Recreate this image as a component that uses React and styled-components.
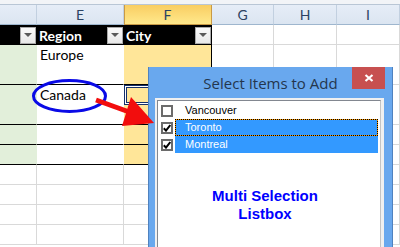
import styled, { createGlobalStyle } from 'styled-components'

const cols = '37px 87px 88px 62px 63px 63px'

const GlobalStyle = createGlobalStyle`
    *, *::before, *::after { box-sizing: border-box; }
    html, body { margin: 0; padding: 0; overflow: hidden; background: #fff; }
    body { font-family: Lato, 'Liberation Sans', sans-serif; }
`

const Screen = styled.div`
    position: relative;
    width: 400px;
    height: 247px;
    overflow: hidden;
    background: #fff;
`

const TopStrip = styled.div`
    height: 5px;
    background: #f2f4f7;
    border-bottom: 1px solid #b9c6d5;
`

const Row = styled.div`
    display: grid;
    grid-template-columns: ${cols};
    height: ${(p) => p.$h || 20}px;
`

const ColHead = styled.div`
    display: flex;
    align-items: center;
    justify-content: center;
    font-size: 14px;
    color: #2b4262;
    background: ${(p) =>
        p.$active
            ? 'linear-gradient(#f9cd62, #ffe98c)'
            : 'linear-gradient(#e6edf7, #dbe5f1)'};
    border-right: 1px solid ${(p) => (p.$active ? '#c99a45' : '#c2d0e0')};
    border-bottom: 1px solid ${(p) => (p.$active ? '#c99a45' : '#9eb6ce')};
    box-shadow: ${(p) => (p.$active ? 'inset 1px 0 #c99a45' : 'none')};
`

const Cell = styled.div`
    display: flex;
    align-items: flex-start;
    padding: 0 2px 0 3px;
    font-size: 14px;
    line-height: 20px;
    color: #000;
    background: ${(p) => p.$bg || '#fff'};
    border-right: 1px solid ${(p) => p.$br || '#d9d9d9'};
    border-bottom: 1px solid ${(p) => p.$bb || '#d9d9d9'};
    box-shadow: ${(p) =>
        p.$selected
            ? 'inset 0 0 0 1px #15306a, inset 0 0 0 2px #fff, inset 0 0 0 3px #15306a'
            : 'none'};
`

const HeadCell = styled.div`
    display: flex;
    align-items: center;
    justify-content: space-between;
    padding: 0 1px 0 2px;
    background: #000;
    color: #fff;
    font-size: 14px;
    font-weight: 700;
`

const Dropdown = styled.div`
    width: 16px;
    height: 17px;
    background: linear-gradient(#fafafa, #e8e8e8);
    border: 1px solid #a9a9a9;
    display: flex;
    align-items: center;
    justify-content: center;
    &::after {
        content: '';
        border-left: 4px solid transparent;
        border-right: 4px solid transparent;
        border-top: 4px solid #5a5a5a;
    }
`

const Dialog = styled.div`
    position: absolute;
    left: 148px;
    top: 67px;
    width: 245px;
    height: 190px;
    display: flex;
    flex-direction: column;
    padding: 0 8px 0 6px;
    background: #69a8ee;
    border: 1px solid #4f82bf;
    border-top: none;
`

const TitleBar = styled.div`
    display: grid;
    grid-template-columns: 40px 1fr 40px;
    height: 31px;
    margin: 0 -8px 0 -6px;
`

const Title = styled.div`
    align-self: center;
    text-align: center;
    font-family: 'Open Sans', sans-serif;
    font-size: 15px;
    color: #24364d;
    padding-top: 1px;
`

const CloseBtn = styled.div`
    width: 33px;
    height: 22px;
    background: #c75050;
    display: flex;
    align-items: center;
    justify-content: center;
`

const Client = styled.div`
    flex: 1;
    display: flex;
    padding: 2px 3px 0 2px;
    background: #f0f0f0;
`

const Listbox = styled.div`
    flex: 1;
    display: flex;
    flex-direction: column;
    padding: 1px 2px 0 0;
    background: #fff;
    border-left: 1px solid #828790;
    border-top: 1px solid #828790;
    border-right: 1px solid #c4c4c4;
`

const Item = styled.div`
    display: flex;
    align-items: center;
    height: 17px;
`

const CheckCell = styled.div`
    width: 17px;
    padding-left: 3px;
    display: flex;
    align-items: center;
`

const Box = styled.span`
    width: 12px;
    height: 12px;
    border: 2px solid #6b6b6b;
    background: #fff;
    display: flex;
    align-items: center;
    justify-content: center;
`

const ItemLabel = styled.div`
    flex: 1;
    height: 100%;
    display: flex;
    align-items: center;
    padding: 0 0 2px ${(p) => (p.$focus ? 9 : 10)}px;
    font-family: 'Liberation Sans', Arial, sans-serif;
    font-size: 11px;
    color: ${(p) => (p.$sel ? '#fff' : '#000')};
    background: ${(p) => (p.$sel ? '#3399ff' : 'transparent')};
    ${(p) =>
        p.$focus &&
        `border: 1px dotted #000;
         background: linear-gradient(#3399ff, #3399ff) padding-box, #ff9a00 border-box;`}
`

const Caption = styled.div`
    margin-top: 34px;
    padding-right: 6px;
    text-align: center;
    color: #0000ff;
    font-family: 'Liberation Sans', Arial, sans-serif;
    font-weight: 700;
    font-size: 15px;
    line-height: 18px;
`

const Marks = styled.svg`
    position: absolute;
    left: 0;
    top: 0;
    pointer-events: none;
`

const Check = () => (
    <svg width="8" height="8" viewBox="0 0 8 8">
        <path d="M0.8 4.2 L3 6.6 L7.3 1" fill="none" stroke="#000" strokeWidth="2" />
    </svg>
)

const items = [
    { name: 'Vancouver', checked: false },
    { name: 'Toronto', checked: true, focus: true },
    { name: 'Montreal', checked: true },
]

const GREEN = '#e2efda'
const YELLOW = '#ffe699'

const TableRow = ({ h, text, selected }) => (
    <Row $h={h}>
        <Cell $bg={GREEN} $br={GREEN} $bb="#000" />
        <Cell $bg="#fff" $br="#fff" $bb="#000">{text}</Cell>
        <Cell $bg={YELLOW} $br="#000" $bb="#000" $selected={selected} />
        <Cell />
        <Cell />
        <Cell />
    </Row>
)

const PlainRow = () => (
    <Row>
        <Cell />
        <Cell />
        <Cell />
        <Cell />
        <Cell />
        <Cell />
    </Row>
)

const App = () => {
    return (
        <Screen>
            <GlobalStyle />
            <TopStrip />
            <Row>
                <ColHead />
                <ColHead>E</ColHead>
                <ColHead $active>F</ColHead>
                <ColHead>G</ColHead>
                <ColHead>H</ColHead>
                <ColHead>I</ColHead>
            </Row>
            <Row>
                <HeadCell>
                    <span />
                    <Dropdown />
                </HeadCell>
                <HeadCell>
                    Region
                    <Dropdown />
                </HeadCell>
                <HeadCell>
                    City
                    <Dropdown />
                </HeadCell>
                <Cell />
                <Cell />
                <Cell />
            </Row>
            <TableRow h={40} text="Europe" />
            <TableRow text="Canada" selected />
            <TableRow />
            <TableRow />
            <TableRow />
            <PlainRow />
            <PlainRow />
            <PlainRow />
            <PlainRow />

            <Dialog>
                <TitleBar>
                    <span />
                    <Title>Select Items to Add</Title>
                    <CloseBtn>
                        <svg width="10" height="8" viewBox="0 0 10 8">
                            <path d="M1.5 1 L8.5 7 M8.5 1 L1.5 7" stroke="#fff" strokeWidth="2.2" />
                        </svg>
                    </CloseBtn>
                </TitleBar>
                <Client>
                    <Listbox>
                        {items.map((it) => (
                            <Item key={it.name}>
                                <CheckCell>
                                    <Box>{it.checked && <Check />}</Box>
                                </CheckCell>
                                <ItemLabel $sel={it.checked} $focus={it.focus}>
                                    {it.name}
                                </ItemLabel>
                            </Item>
                        ))}
                        <Caption>
                            Multi Selection
                            <br />
                            Listbox
                        </Caption>
                    </Listbox>
                </Client>
            </Dialog>

            <Marks width="400" height="247" viewBox="0 0 400 247">
                <ellipse cx="69.5" cy="96" rx="36" ry="15.5" fill="none" stroke="#0a0ae6" strokeWidth="3" />
                <line x1="96" y1="100" x2="132" y2="113" stroke="#f20d0d" strokeWidth="5" />
                <polygon points="131,97 154,123 122,126" fill="#f20d0d" />
            </Marks>
        </Screen>
    )
}

export default App
